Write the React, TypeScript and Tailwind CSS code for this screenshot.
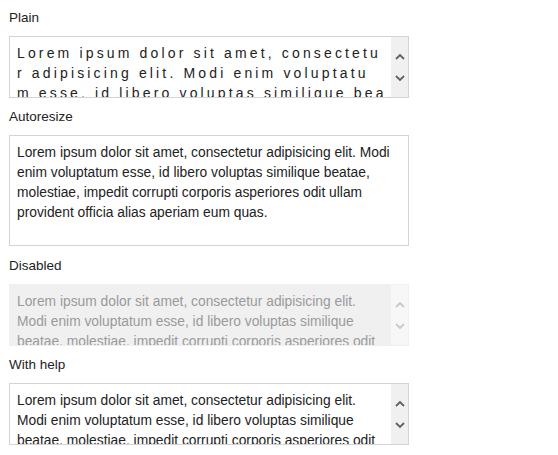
import React from 'react';

const lorem =
  'Lorem ipsum dolor sit amet, consectetur adipisicing elit. Modi enim voluptatum esse, id libero voluptas similique beatae, molestiae, impedit corrupti corporis asperiores odit ullam provident officia alias aperiam eum quas.';

// the plain textarea wraps mid-word; keep its visible lines fixed
const plainLines = [
  'Lorem ipsum dolor sit amet, consectetu',
  'r adipisicing elit. Modi enim voluptatu',
  'm esse, id libero voluptas similique bea',
  'tae, molestiae, impedit corrupti corporis asperiores odit ullam provident officia alias aperiam eum quas.',
];

function Chevron({ up, muted }: { up?: boolean; muted?: boolean }) {
  return (
    <svg width="10" height="7" viewBox="0 0 10 7" className={muted ? 'text-[#c8c8c8]' : 'text-[#606060]'}>
      <path
        d={up ? 'M1 6 L5 2 L9 6' : 'M1 1 L5 5 L9 1'}
        fill="none"
        stroke="currentColor"
        strokeWidth="1.8"
      />
    </svg>
  );
}

function Scrollbar({ muted }: { muted?: boolean }) {
  return (
    <div className={`w-[17px] shrink-0 flex flex-col items-center justify-center gap-[15px] ${muted ? 'bg-[#f7f7f7]' : 'bg-[#f0f0f0]'}`}>
      <Chevron up muted={muted} />
      <Chevron muted={muted} />
    </div>
  );
}

function Field({ label, children }: { label: string; children: React.ReactNode }) {
  return (
    <div className="flex flex-col">
      <label className="text-[13.5px] leading-[18px] text-[#222] mb-[9px]">{label}</label>
      {children}
    </div>
  );
}

export default function App() {
  return (
    <div className="bg-white w-[558px] h-[455px] pl-[9px] pt-[9px] font-['Liberation_Sans',Arial,sans-serif]">
      <div className="w-[400px] flex flex-col">
        <Field label="Plain">
          <div className="h-[62px] border border-[#d4d4d4] flex overflow-hidden">
            <div className="flex-1 min-w-0 pl-[7px] pt-[6px] pr-[4px] text-[14px] leading-[20px] tracking-[3.15px] text-[#222] overflow-hidden">
              {plainLines.map((line, i) => (
                <div key={i} className={i < 3 ? 'whitespace-pre overflow-hidden' : 'break-all'}>
                  {line}
                </div>
              ))}
            </div>
            <Scrollbar />
          </div>
        </Field>

        <div className="h-[10px]" />
        <Field label="Autoresize">
          <div className="h-[111px] border border-[#d4d4d4] pl-[7px] pr-[6px] pt-[7px] text-[13.8px] leading-[20px] text-[#222]">
            {lorem}
          </div>
        </Field>

        <div className="h-[11px]" />
        <Field label="Disabled">
          <div className="h-[62px] border border-[#f0f0f0] bg-[#f0f0f0] flex overflow-hidden">
            <div className="flex-1 pl-[7px] pt-[7px] pr-[12px] text-[13.8px] leading-[20px] text-[#9a9a9a] overflow-hidden">
              {lorem}
            </div>
            <Scrollbar muted />
          </div>
        </Field>

        <div className="h-[10px]" />
        <Field label="With help">
          <div className="h-[62px] border border-[#d4d4d4] flex overflow-hidden">
            <div className="flex-1 pl-[7px] pt-[7px] pr-[12px] text-[13.8px] leading-[20px] text-[#222] overflow-hidden">
              {lorem}
            </div>
            <Scrollbar />
          </div>
        </Field>
      </div>
    </div>
  );
}
